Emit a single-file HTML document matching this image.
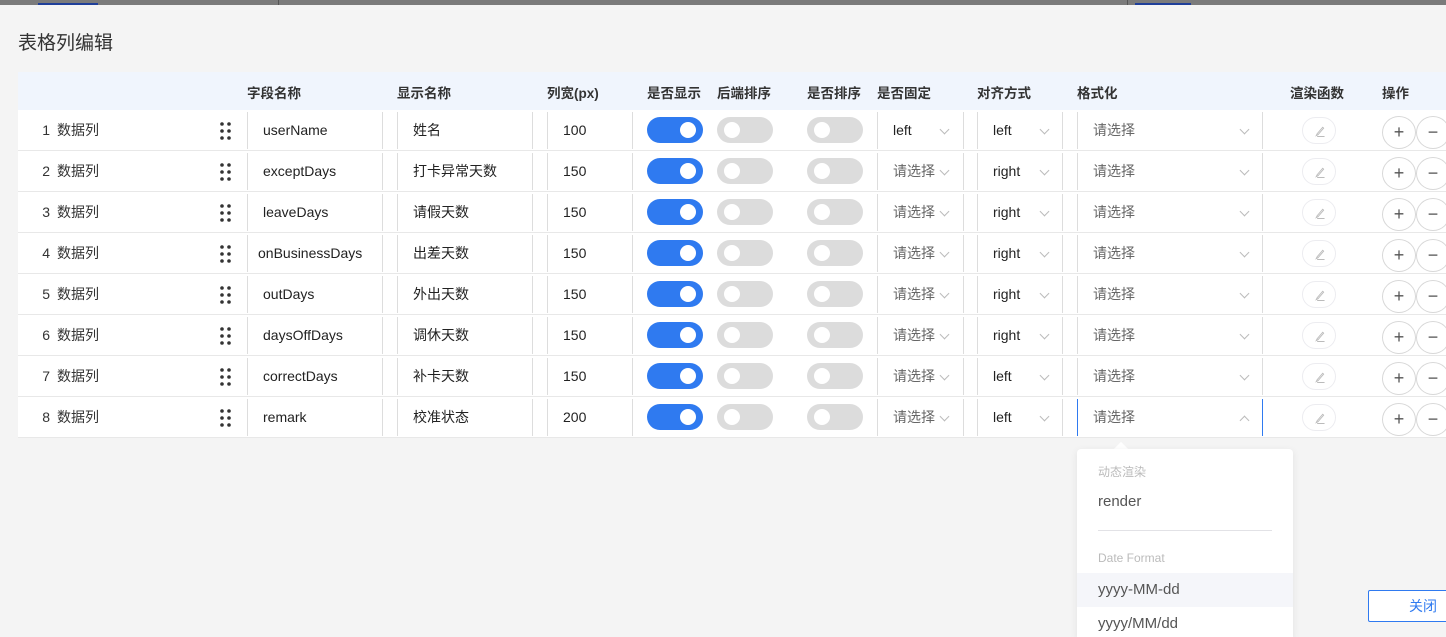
<!DOCTYPE html>
<html><head><meta charset="utf-8"><style>
*{box-sizing:border-box;margin:0;padding:0}
html{width:1446px;height:637px;overflow:hidden}
body{width:1446px;height:637px;overflow:hidden;background:#f4f4f4;font-family:"Liberation Sans","Noto Sans CJK SC",sans-serif;position:relative;color:#333;font-size:14px}
.top{position:absolute;left:0;top:0;width:1446px;height:5px;background:#7b7b7b}
.ab{position:absolute}
.hd{position:absolute;left:18px;top:72px;width:1428px;height:38px;background:#f0f5fd}
.hd span{position:absolute;top:10px;font-weight:bold;font-size:13.5px;color:#333}
.row{position:absolute;left:18px;width:1428px;height:41px;background:#fff;border-bottom:1px solid #e8e8e8}
.row>*{position:absolute}
.n{left:18px;width:14px;text-align:right;top:11px;font-size:14px;line-height:18px}
.l{left:39px;top:11px;font-size:14px;line-height:18px}
.dots{left:201px;top:11px;width:14px;height:20px}
.c{top:2px;height:37px;border-left:1px solid #ddd;border-right:1px solid #ddd;line-height:37px;padding-left:15px;font-size:14px;color:#222}
.ph{color:#666}
.arr{position:absolute;top:14px;width:7px;height:7px;border-right:1px solid #bbb;border-bottom:1px solid #bbb;transform:rotate(45deg)}
.tg{top:7px;width:56px;height:26px;border-radius:13px;background:#dcdcdc}
.tg i{position:absolute;top:5px;left:7px;width:16px;height:16px;border-radius:50%;background:#fff}
.tg.on{background:#2f7af0}
.tg.on i{left:33px}
.rb{left:1284px;top:7px;width:34px;height:27px;border:1px solid #ececf0;border-radius:14px}
.pb,.mb{top:6px;width:34px;height:33px;border:1px solid #d8d8d8;border-radius:50%;text-align:center;line-height:30px;font-size:18px;color:#555;background:#fff}
.pb{left:1364px}.mb{left:1398px}
</style></head><body>
<div class="top"></div>
<div class="ab" style="left:38px;top:3px;width:60px;height:2px;background:#1f3f99"></div>
<div class="ab" style="left:1135px;top:3px;width:56px;height:2px;background:#1f3f99"></div>
<div class="ab" style="left:278px;top:0;width:1px;height:5px;background:#555"></div>
<div class="ab" style="left:1127px;top:0;width:1px;height:5px;background:#555"></div>
<div class="ab" style="left:18px;top:28px;font-size:19px;color:#333">表格列编辑</div>
<div class="hd">
<span style="left:229px">字段名称</span><span style="left:379px">显示名称</span><span style="left:529px">列宽(px)</span><span style="left:629px">是否显示</span><span style="left:699px">后端排序</span><span style="left:789px">是否排序</span><span style="left:859px">是否固定</span><span style="left:959px">对齐方式</span><span style="left:1059px">格式化</span><span style="left:1272px">渲染函数</span><span style="left:1364px">操作</span>
</div>

<svg width="0" height="0" style="position:absolute"><defs><g id="d"><circle cx="3" cy="3" r="1.8" fill="#333"/><circle cx="10" cy="3" r="1.8" fill="#333"/><circle cx="3" cy="10" r="1.8" fill="#333"/><circle cx="10" cy="10" r="1.8" fill="#333"/><circle cx="3" cy="17" r="1.8" fill="#333"/><circle cx="10" cy="17" r="1.8" fill="#333"/></g><g id="p"><path d="M6 13 L4 14 L5 12 L11 5 L12 6 Z" fill="none" stroke="#bbb" stroke-width="1"/><path d="M5 15 H13" stroke="#bbb"/></g></defs></svg>

<div class="row" style="top:110px"><span class="n">1</span><span class="l">数据列</span><svg class="dots"><use href="#d"/></svg><div class="c" style="left:229px;width:136px">userName</div><div class="c" style="left:379px;width:136px">姓名</div><div class="c" style="left:529px;width:86px">100</div><div class="tg on" style="left:629px"><i></i></div><div class="tg" style="left:699px"><i></i></div><div class="tg" style="left:789px"><i></i></div><div class="c" style="left:859px;width:87px">left<b class="arr" style="left:63px"></b></div><div class="c" style="left:959px;width:86px">left<b class="arr" style="left:63px"></b></div><div class="c ph" style="left:1059px;width:186px">请选择<b class="arr" style="left:163px"></b></div><svg class="rb" viewBox="-10 -5 34 27"><use href="#p"/></svg><div class="pb">+</div><div class="mb">−</div></div>

<div class="row" style="top:151px"><span class="n">2</span><span class="l">数据列</span><svg class="dots"><use href="#d"/></svg><div class="c" style="left:229px;width:136px">exceptDays</div><div class="c" style="left:379px;width:136px">打卡异常天数</div><div class="c" style="left:529px;width:86px">150</div><div class="tg on" style="left:629px"><i></i></div><div class="tg" style="left:699px"><i></i></div><div class="tg" style="left:789px"><i></i></div><div class="c ph" style="left:859px;width:87px">请选择<b class="arr" style="left:63px"></b></div><div class="c" style="left:959px;width:86px">right<b class="arr" style="left:63px"></b></div><div class="c ph" style="left:1059px;width:186px">请选择<b class="arr" style="left:163px"></b></div><svg class="rb" viewBox="-10 -5 34 27"><use href="#p"/></svg><div class="pb">+</div><div class="mb">−</div></div>

<div class="row" style="top:192px"><span class="n">3</span><span class="l">数据列</span><svg class="dots"><use href="#d"/></svg><div class="c" style="left:229px;width:136px">leaveDays</div><div class="c" style="left:379px;width:136px">请假天数</div><div class="c" style="left:529px;width:86px">150</div><div class="tg on" style="left:629px"><i></i></div><div class="tg" style="left:699px"><i></i></div><div class="tg" style="left:789px"><i></i></div><div class="c ph" style="left:859px;width:87px">请选择<b class="arr" style="left:63px"></b></div><div class="c" style="left:959px;width:86px">right<b class="arr" style="left:63px"></b></div><div class="c ph" style="left:1059px;width:186px">请选择<b class="arr" style="left:163px"></b></div><svg class="rb" viewBox="-10 -5 34 27"><use href="#p"/></svg><div class="pb">+</div><div class="mb">−</div></div>

<div class="row" style="top:233px"><span class="n">4</span><span class="l">数据列</span><svg class="dots"><use href="#d"/></svg><div class="c" style="left:229px;width:136px;padding-left:10px">onBusinessDays</div><div class="c" style="left:379px;width:136px">出差天数</div><div class="c" style="left:529px;width:86px">150</div><div class="tg on" style="left:629px"><i></i></div><div class="tg" style="left:699px"><i></i></div><div class="tg" style="left:789px"><i></i></div><div class="c ph" style="left:859px;width:87px">请选择<b class="arr" style="left:63px"></b></div><div class="c" style="left:959px;width:86px">right<b class="arr" style="left:63px"></b></div><div class="c ph" style="left:1059px;width:186px">请选择<b class="arr" style="left:163px"></b></div><svg class="rb" viewBox="-10 -5 34 27"><use href="#p"/></svg><div class="pb">+</div><div class="mb">−</div></div>

<div class="row" style="top:274px"><span class="n">5</span><span class="l">数据列</span><svg class="dots"><use href="#d"/></svg><div class="c" style="left:229px;width:136px">outDays</div><div class="c" style="left:379px;width:136px">外出天数</div><div class="c" style="left:529px;width:86px">150</div><div class="tg on" style="left:629px"><i></i></div><div class="tg" style="left:699px"><i></i></div><div class="tg" style="left:789px"><i></i></div><div class="c ph" style="left:859px;width:87px">请选择<b class="arr" style="left:63px"></b></div><div class="c" style="left:959px;width:86px">right<b class="arr" style="left:63px"></b></div><div class="c ph" style="left:1059px;width:186px">请选择<b class="arr" style="left:163px"></b></div><svg class="rb" viewBox="-10 -5 34 27"><use href="#p"/></svg><div class="pb">+</div><div class="mb">−</div></div>

<div class="row" style="top:315px"><span class="n">6</span><span class="l">数据列</span><svg class="dots"><use href="#d"/></svg><div class="c" style="left:229px;width:136px">daysOffDays</div><div class="c" style="left:379px;width:136px">调休天数</div><div class="c" style="left:529px;width:86px">150</div><div class="tg on" style="left:629px"><i></i></div><div class="tg" style="left:699px"><i></i></div><div class="tg" style="left:789px"><i></i></div><div class="c ph" style="left:859px;width:87px">请选择<b class="arr" style="left:63px"></b></div><div class="c" style="left:959px;width:86px">right<b class="arr" style="left:63px"></b></div><div class="c ph" style="left:1059px;width:186px">请选择<b class="arr" style="left:163px"></b></div><svg class="rb" viewBox="-10 -5 34 27"><use href="#p"/></svg><div class="pb">+</div><div class="mb">−</div></div>

<div class="row" style="top:356px"><span class="n">7</span><span class="l">数据列</span><svg class="dots"><use href="#d"/></svg><div class="c" style="left:229px;width:136px">correctDays</div><div class="c" style="left:379px;width:136px">补卡天数</div><div class="c" style="left:529px;width:86px">150</div><div class="tg on" style="left:629px"><i></i></div><div class="tg" style="left:699px"><i></i></div><div class="tg" style="left:789px"><i></i></div><div class="c ph" style="left:859px;width:87px">请选择<b class="arr" style="left:63px"></b></div><div class="c" style="left:959px;width:86px">left<b class="arr" style="left:63px"></b></div><div class="c ph" style="left:1059px;width:186px">请选择<b class="arr" style="left:163px"></b></div><svg class="rb" viewBox="-10 -5 34 27"><use href="#p"/></svg><div class="pb">+</div><div class="mb">−</div></div>

<div class="row" style="top:397px"><span class="n">8</span><span class="l">数据列</span><svg class="dots"><use href="#d"/></svg><div class="c" style="left:229px;width:136px">remark</div><div class="c" style="left:379px;width:136px">校准状态</div><div class="c" style="left:529px;width:86px">200</div><div class="tg on" style="left:629px"><i></i></div><div class="tg" style="left:699px"><i></i></div><div class="tg" style="left:789px"><i></i></div><div class="c ph" style="left:859px;width:87px">请选择<b class="arr" style="left:63px"></b></div><div class="c" style="left:959px;width:86px">left<b class="arr" style="left:63px"></b></div><div class="c ph" style="left:1059px;width:186px;border-color:#2f7af0">请选择<b class="arr" style="left:163px;top:18px;transform:rotate(225deg)"></b></div><svg class="rb" viewBox="-10 -5 34 27"><use href="#p"/></svg><div class="pb">+</div><div class="mb">−</div></div>

<div class="ab" style="left:1116px;top:444px;width:10px;height:10px;background:#fff;transform:rotate(45deg)"></div>
<div class="ab" style="left:1077px;top:449px;width:216px;height:188px;background:#fff;border-radius:4px 4px 0 0;box-shadow:0 2px 8px rgba(0,0,0,.08)">
<div class="ab" style="left:21px;top:14px;font-size:12px;color:#bbb">动态渲染</div>
<div class="ab" style="left:21px;top:44px;font-size:15px;color:#555">render</div>
<div class="ab" style="left:21px;top:81px;width:174px;height:1px;background:#e2e2e6"></div>
<div class="ab" style="left:21px;top:102px;font-size:12px;color:#bbb">Date Format</div>
<div class="ab" style="left:0;top:124px;width:216px;height:34px;background:#f5f6fa"></div>
<div class="ab" style="left:21px;top:132px;font-size:15px;color:#555">yyyy-MM-dd</div>
<div class="ab" style="left:21px;top:166px;font-size:15px;color:#555">yyyy/MM/dd</div>
</div>
<div class="ab" style="left:1368px;top:590px;width:90px;height:32px;border:1px solid #2f7af0;border-radius:2px;background:#fff;color:#2f7af0;font-size:14px;line-height:30px;padding-left:40px">关闭</div>
</body></html>
